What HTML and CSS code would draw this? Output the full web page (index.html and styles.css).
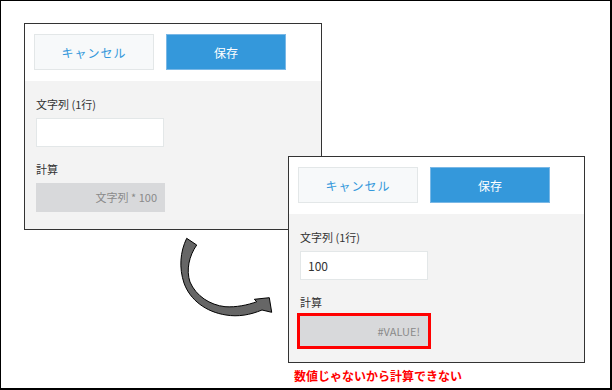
FILE: index.html
```html
<!DOCTYPE html>
<html lang="ja">

<head>
  <meta charset="UTF-8">
  <meta name="viewport" content="width=device-width, initial-scale=1.0">
  <title>計算フィールド</title>
  <link rel="stylesheet" href="styles.css">
</head>

<body>
  <div class="canvas">
    <!-- 入力前 -->
    <section class="panel panel-before">
      <div class="panel-head">
        <button class="btn btn-cancel">キャンセル</button>
        <button class="btn btn-save">保存</button>
      </div>
      <div class="panel-body">
        <div class="field">
          <label class="field-label">文字列 (1行)</label>
          <div class="field-input"></div>
        </div>
        <div class="field">
          <label class="field-label">計算</label>
          <div class="field-calc">文字列 * 100</div>
        </div>
      </div>
    </section>

    <svg class="arrow" viewBox="170 235 110 85" width="110" height="85">
      <path d="M186.7,238.3 L196.7,245 C189,256 186,270 190,282 C196,296 210,305 225,306.7 C236,307.5 248,305 256.7,301.7 L254.3,299.3 L269.3,297.7 L271.7,312.3 L262,310 C250,315 238,317 226,315 C206,312 190,300 184,283 C179,268 180,252 186.7,238.3 Z"
        fill="#666" stroke="#000" stroke-width="1" stroke-linejoin="round" />
    </svg>

    <!-- 入力後 -->
    <section class="panel panel-after">
      <div class="panel-head">
        <button class="btn btn-cancel">キャンセル</button>
        <button class="btn btn-save">保存</button>
      </div>
      <div class="panel-body">
        <div class="field">
          <label class="field-label">文字列 (1行)</label>
          <div class="field-input">100</div>
        </div>
        <div class="field">
          <label class="field-label">計算</label>
          <div class="field-calc is-error">#VALUE!</div>
        </div>
      </div>
    </section>

    <p class="note">数値じゃないから計算できない</p>
  </div>
</body>

</html>
```

FILE: styles.css
```css
html {
  box-sizing: border-box;
  font-family: "Noto Sans CJK JP", sans-serif;
  font-size: 12px;
}

*,
*:before,
*:after {
  box-sizing: inherit;
}

body {
  margin: 0;
  background-color: #fff;
}

/* 全体の枠 */
.canvas {
  position: relative;
  width: 612px;
  height: 390px;
  border-top: 1px solid #000;
  border-left: 1px solid #000;
  border-right: 2px solid #000;
  border-bottom: 2px solid #000;
  overflow: hidden;
}

.panel {
  position: absolute;
  width: 298px;
  height: 207px;
  border: 1px solid #333;
  background-color: #f3f3f3;
  display: flex;
  flex-direction: column;
}

.panel-before {
  left: 23px;
  top: 22px;
}

.panel-after {
  left: 287px;
  top: 155px;
  width: 297px;
}

.panel-head {
  height: 57px;
  padding: 10px 0 0 9px;
  display: flex;
  gap: 12px;
  background-color: #fff;
}

.btn {
  width: 120px;
  height: 36px;
  font-family: inherit;
  font-size: 12px;
  border: 1px solid #e3e7e8;
  cursor: pointer;
}

.btn-cancel {
  background-color: #f7f9fa;
  color: #3498db;
  letter-spacing: 1px;
}

.btn-save {
  background-color: #3498db;
  border-color: #7ab8e6;
  color: #fff;
}

.panel-body {
  flex: 1;
  padding: 15px 0 0 11px;
}

.field + .field {
  margin-top: 14px;
}

.field-label {
  display: block;
  font-size: 11px;
  line-height: 16px;
  color: #333;
  margin-bottom: 6px;
}

.field-input {
  width: 128px;
  height: 29px;
  background-color: #fff;
  border: 1px solid #e3e7e8;
  padding: 0 7px;
  font-size: 12px;
  line-height: 27px;
  color: #333;
}

.field-calc {
  width: 129px;
  height: 29px;
  background-color: #d8d9db;
  padding: 0 8px;
  font-size: 11px;
  line-height: 29px;
  text-align: right;
  color: #8a8a8a;
}

.field-calc.is-error {
  width: 128px;
  height: 30px;
  line-height: 30px;
  outline: 3px solid #f00;
}

.arrow {
  position: absolute;
  left: 169px;
  top: 234px;
}

.note {
  position: absolute;
  left: 293px;
  top: 367px;
  margin: 0;
  font-size: 12px;
  line-height: 16px;
  font-weight: bold;
  color: #f00;
}
```
